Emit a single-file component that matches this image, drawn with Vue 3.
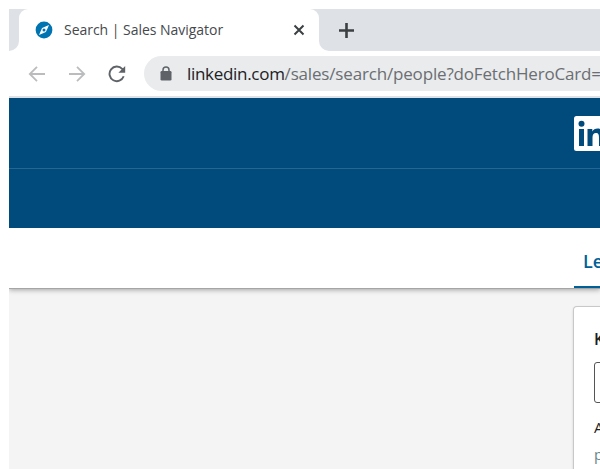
<script setup>
const tabTitle = 'Search | Sales Navigator'
const host = 'linkedin.com'
const path = '/sales/search/people?doFetchHeroCard='
</script>

<template>
  <div class="window">
    <div class="tabstrip">
      <div class="edge left"></div>
      <div class="tab">
        <svg class="favicon" viewBox="0 0 18 18" width="18" height="18">
          <circle cx="9" cy="9" r="8.4" fill="#0073b1" />
          <path d="M14 4 10.9 10.9 4 14 7.1 7.1Z" fill="#fff" />
          <circle cx="9" cy="9" r="1.5" fill="#0073b1" />
        </svg>
        <span class="title">{{ tabTitle }}</span>
        <svg class="close" viewBox="0 0 12 12" width="12" height="12">
          <path d="M1.5 1.5 10.5 10.5M10.5 1.5 1.5 10.5" stroke="#3c4043" stroke-width="2" />
        </svg>
      </div>
      <div class="edge right">
        <svg class="plus" viewBox="0 0 16 16" width="16" height="16">
          <path d="M8.5 1V16M1 8.5H16" stroke="#3c4043" stroke-width="2.6" />
        </svg>
      </div>
    </div>
    <div class="toolbar">
      <svg viewBox="0 0 18 18" width="18" height="18">
        <path d="M17 9H2M9 1.8 1.8 9 9 16.2" fill="none" stroke="#babcbe" stroke-width="1.8" />
      </svg>
      <svg viewBox="0 0 18 18" width="18" height="18">
        <path d="M1 9H16M9 1.8 16.2 9 9 16.2" fill="none" stroke="#babcbe" stroke-width="1.8" />
      </svg>
      <svg viewBox="0 0 18 18" width="18" height="18">
        <path d="M15.7 11.3A7.3 7.3 0 1 1 14.2 3.9L15.5 5.6" fill="none" stroke="#5f6368" stroke-width="1.9" />
        <path d="M17.2 1V7.8H10.4Z" fill="#5f6368" />
      </svg>
      <div class="omnibox">
        <svg class="lock" viewBox="0 0 12 15" width="12" height="15">
          <path d="M3 6.5V4A3 3 0 0 1 9 4V6.5" fill="none" stroke="#5f6368" stroke-width="1.5" />
          <rect x=".5" y="5" width="11" height="9.5" rx="1.3" fill="#5f6368" />
        </svg>
        <span class="host">{{ host }}</span><span class="path">{{ path }}</span>
      </div>
    </div>
    <header class="brand">
      <div class="brand-top">
        <svg class="logo" viewBox="0 0 36 35" width="36" height="35">
          <rect width="36" height="35" rx="2.5" fill="#fff" />
          <circle cx="7.5" cy="7.8" r="3" fill="#004b7c" />
          <path d="M5 13h5v17H5zM13.5 13h4.8v2.4c1-1.7 2.8-2.8 5.3-2.8 5 0 6.4 3.2 6.4 8V30h-5v-8.3c0-2.5-.5-4.6-3-4.6s-3.5 1.8-3.5 4.5V30h-5z" fill="#004b7c" />
        </svg>
      </div>
    </header>
    <nav class="subnav"><div class="lead">Le</div></nav>
    <main class="content">
      <section class="card">
        <div class="keywords">K</div>
        <div class="field"></div>
        <div class="add">A</div>
        <div class="hint">p</div>
      </section>
    </main>
  </div>
</template>

<style>
body { background: #fff; overflow: hidden; }
</style>

<style scoped>
* { box-sizing: border-box; }
.window {
  width: 600px; height: 469px; padding: 9px 0 0 9px; overflow: hidden;
  display: flex; flex-direction: column; background: #fff;
  font-family: "Open Sans", "Noto Sans", sans-serif;
}
svg { display: block; flex: none; }
.tabstrip {
  height: 42px; flex: none; display: flex;
  background: linear-gradient(to bottom, #dee1e6 20px, #fff 20px);
}
.edge { background: #dee1e6; height: 42px; }
.left { width: 10px; flex: none; border-bottom-right-radius: 10px; }
.tab {
  width: 300px; flex: none; background: #fff; border-radius: 9px 9px 0 0;
  display: flex; align-items: center; padding-left: 16px;
}
.title { width: 223px; margin-left: 11px; font-size: 14px; line-height: 20px; letter-spacing: -0.03px; color: #45494d; white-space: pre; }
.close { margin-left: 6px; }
.right { flex: 1; border-bottom-left-radius: 10px; padding: 13px 0 0 19px; }
.toolbar {
  height: 47px; flex: none; border-bottom: 2px solid #dee1e6;
  display: flex; align-items: center; gap: 22px; padding-left: 19px;
}
.omnibox {
  flex: 1; min-width: 0; height: 35px; margin-left: -4px; border-radius: 18px 0 0 18px;
  background: #e9ebed; display: flex; align-items: center; padding-left: 16px;
  font-size: 17px; line-height: 24px; white-space: pre; overflow: hidden;
}
.lock { margin-right: 15px; }
.host { color: #202124; letter-spacing: -0.3px; }
.path { color: #6b6e72; letter-spacing: -0.17px; }
.brand { height: 130px; flex: none; background: #004b7c; }
.brand-top { height: 71px; padding: 18px 0 0 565px; border-bottom: 1px solid #266690; }
.subnav {
  height: 60px; flex: none; display: flex; padding-left: 565px; background: #fff;
  box-shadow: 0 1px 0 #a5a5a5, 0 2px 5px #0005; position: relative; clip-path: inset(0 0 -10px 0);
}
.lead {
  width: 60px; flex: none; padding: 21px 0 0 9px; border-bottom: 2px solid #006097;
  color: #006097; font-size: 18px; line-height: 25px; font-weight: 600;
}
.content { flex: 1; background: #f4f4f4; padding: 19px 0 0 565px; }
.card {
  width: 60px; height: 180px; padding: 22px 0 0 20px; background: #fff;
  border-radius: 3px; box-shadow: 0 0 0 1px #c8c8c8, 0 1px 3px #0005;
  font-size: 16px; line-height: 22px; color: #1d1d1d; overflow: hidden;
}
.keywords { margin-top: -1px; font-weight: 600; }
.field { width: 60px; height: 41px; margin-top: 12px; border: 1px solid #555; border-radius: 3px; }
.add { margin-top: 13px; font-size: 15px; font-weight: 500; }
.hint { margin-top: 5px; font-size: 15px; color: #69858b; }
</style>
